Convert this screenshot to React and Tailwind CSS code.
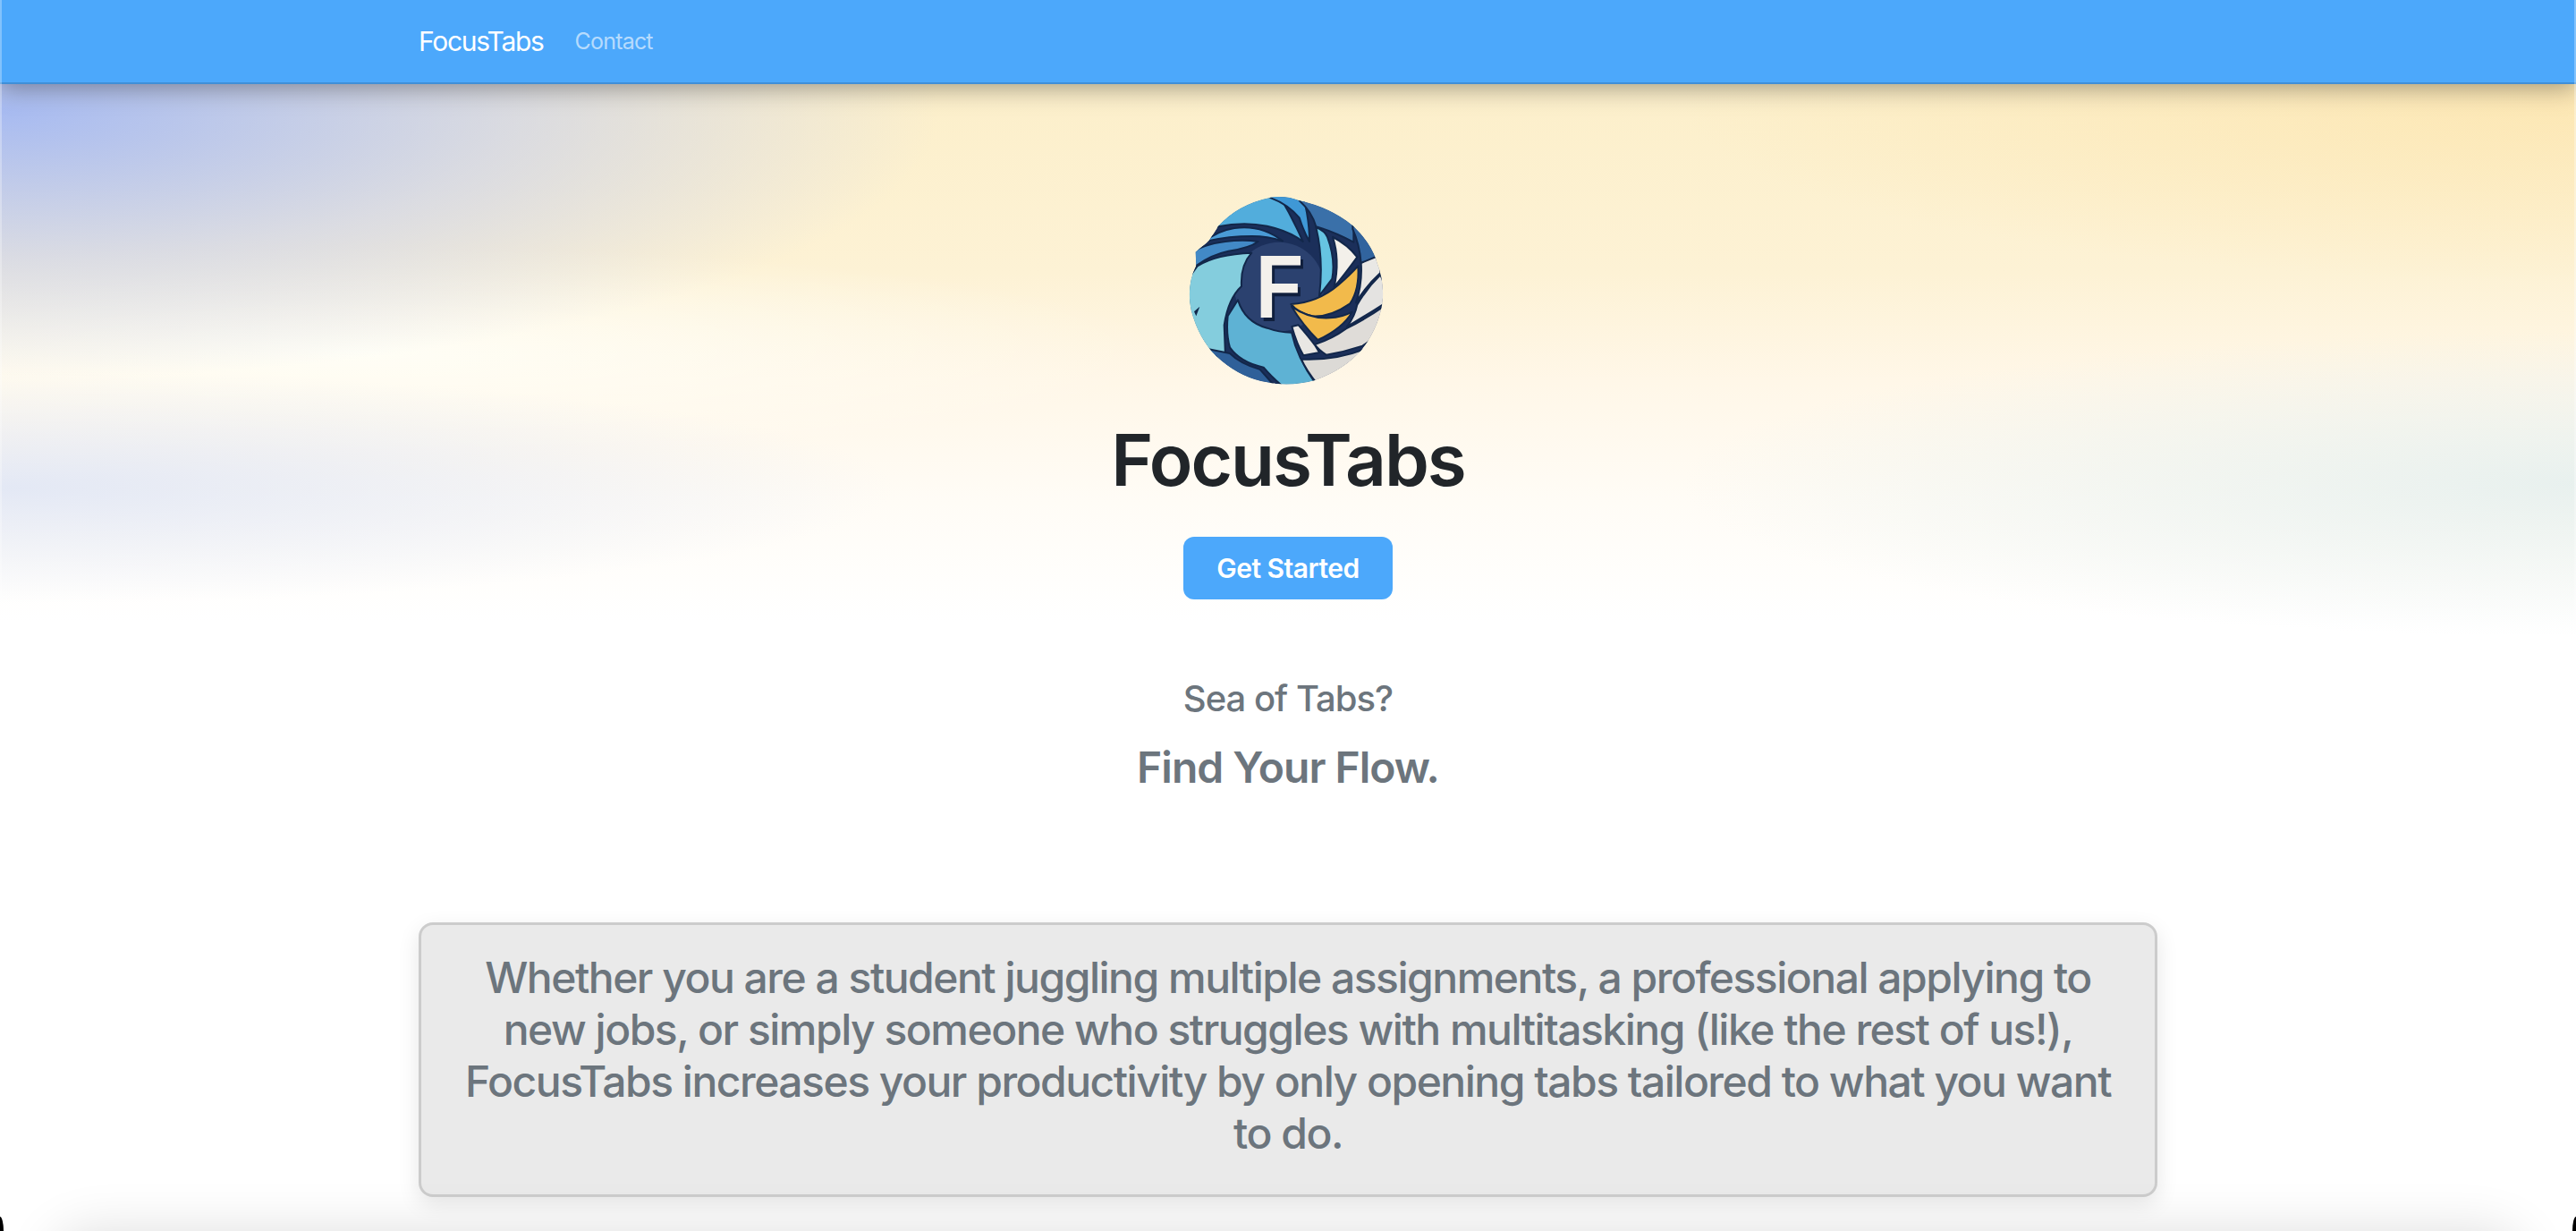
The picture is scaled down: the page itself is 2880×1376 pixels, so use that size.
const petals = [
  ["M290 192 Q350 90 510 85 Q555 160 590 240 Q545 205 470 188 Q390 172 305 190Z", "#52addc"],
  ["M470 85 L590 85 Q612 165 612 240 Q592 205 578 160 Q540 115 483 94Z", "#3f98d6"],
  ["M578 90 L760 160 L760 242 Q690 205 634 190 Q620 140 578 103Z", "#3a70a9"],
  ["M757 170 L860 290 L785 312 Q780 250 757 198Z", "#31649e"],
  ["M262 240 Q300 205 360 195 Q450 182 522 238 Q470 222 420 222 Q340 222 272 238Z", "#4a9bd6"],
  ["M215 280 Q250 250 330 240 Q390 232 440 240 Q410 262 340 272 Q280 285 234 320 L215 320Z", "#4289c6"],
  ["M236 322 Q300 282 418 278 Q380 320 384 390 Q340 430 326 520 L330 625 L240 620 L180 400Z", "#84cddd"],
  ["M338 490 L372 436 Q395 510 470 530 Q510 545 552 545 Q570 630 632 715 L540 740 Q490 700 458 662 Q380 645 345 595 Q332 550 338 490Z", "#5eb2d4"],
  ["M270 600 L345 615 Q380 650 445 668 L500 730 L340 720Z", "#2f6099"],
  ["M634 192 Q665 205 672 225 Q700 300 688 365 L645 422 Q660 300 634 192Z", "#66c4e2"],
  ["M690 225 Q740 250 772 292 Q730 350 695 392 Q715 300 690 225Z", "#f3f0ea"],
  ["M550 450 Q640 445 710 385 Q750 350 775 322 Q780 400 748 448 Q680 495 620 490 Q575 480 550 450Z", "#f2ba4b"],
  ["M552 458 Q610 500 680 496 Q720 495 755 476 Q725 530 640 570 Q590 520 552 458Z", "#f2ba4b"],
  ["M785 312 L850 285 L850 345 Q800 390 768 445 Q790 380 785 312Z", "#e9e8e5"],
  ["M850 352 L880 420 L860 450 Q790 495 738 525 Q765 490 772 452 Q805 395 850 352Z", "#e4e3e1"],
  ["M860 458 L860 540 L790 590 Q730 610 668 620 Q640 600 630 585 Q690 565 735 532 Q800 500 860 458Z", "#dfdcd8"],
  ["M553 525 L575 520 Q610 560 632 590 L645 612 L592 622 Q570 585 553 525Z", "#e9e7e4"],
  ["M585 635 Q700 640 800 600 L790 660 L640 720 Q600 670 585 635Z", "#dcdad6"],
];

const outline =
  "M483 92 Q535 85 578 103 Q680 125 755 185 Q815 240 835 300 Q862 370 858 430 Q850 520 790 600 Q730 670 630 705 Q540 730 450 708 Q370 690 300 625 Q240 565 215 470 Q198 390 232 320 L230 275 L275 237 L305 190 Q370 115 483 92Z";

function Logo() {
  return (
    <svg viewBox="201 78 678 654" className="w-[226px] h-[218px] block" aria-label="FocusTabs logo">
      <defs>
        <clipPath id="logo-outline">
          <path d={outline} />
        </clipPath>
      </defs>
      <g clipPath="url(#logo-outline)">
        <path d={outline} fill="#1b2f5a" />
        <circle cx="510" cy="392" r="150" fill="#2b416f" />
        {petals.map(([d, fill], i) => (
          <path key={i} d={d} fill={fill} stroke="#12274a" strokeWidth="6" strokeLinejoin="round" />
        ))}
        <path d="M225 475 L244 458 L232 490Z" fill="#12274a" />
      </g>
      <text x="437" y="506" fontFamily="Inter, sans-serif" fontWeight="600" fontSize="285" fill="#101f3d">F</text>
      <text x="428" y="494" fontFamily="Inter, sans-serif" fontWeight="600" fontSize="285" fill="#f4f1ec">F</text>
    </svg>
  );
}

export default function App() {
  return (
    <div className="relative h-screen overflow-hidden bg-white font-['Inter',sans-serif]">
      <nav className="relative z-10 h-[94px] bg-[#4ca8fb] border-b-2 border-[#3f8fd8] shadow-[0_4px_26px_rgba(0,0,0,0.36)]">
        <div className="w-[1944px] mx-auto h-full flex items-center gap-[35px]">
          <span className="text-[30px] text-white leading-none tracking-[-1.3px]">FocusTabs</span>
          <span className="text-[25px] text-white/60 leading-none tracking-[-0.8px]">Contact</span>
        </div>
      </nav>

      <main className="flex flex-col items-center bg-no-repeat bg-[length:100%_640px] bg-[image:radial-gradient(ellipse_1050px_300px_at_0px_30px,rgba(163,184,243,0.95),rgba(200,208,235,0.65)_55%,rgba(255,255,255,0)_100%),radial-gradient(ellipse_1000px_130px_at_0px_451px,rgba(224,230,245,0.9),rgba(255,255,255,0)_100%),radial-gradient(ellipse_1000px_170px_at_100%_447px,rgba(231,240,238,0.95),rgba(255,255,255,0)_100%),radial-gradient(ellipse_900px_120px_at_400px_300px,rgba(255,255,248,0.9),rgba(255,255,255,0)_100%),radial-gradient(ellipse_1000px_200px_at_100%_20px,rgba(253,226,165,0.6),rgba(255,255,255,0)_100%),linear-gradient(to_bottom,#fcefca_0%,#fdf2d5_33%,#fff7e8_52%,#fffcf6_73%,#ffffff_94%)]">
        <div className="mt-[122px]">
          <Logo />
        </div>
        <h1 className="mt-[32px] text-[80px] leading-[96px] font-semibold text-[#212529] tracking-[-2px]">FocusTabs</h1>
        <button className="mt-[38px] w-[234px] h-[70px] rounded-[12px] bg-[#4ca8fb] text-white text-[30px] font-semibold tracking-[-0.5px]">
          Get Started
        </button>
        <p className="mt-[87px] text-[40px] leading-[48px] font-medium text-[#6c757d] tracking-[-1px]">Sea of Tabs?</p>
        <p className="mt-[24px] text-[48px] leading-[58px] font-semibold text-[#6c757d] tracking-[-1px]">Find Your Flow.</p>
        <section className="mt-[144px] w-[1944px] h-[307px] rounded-[16px] border-[3px] border-[#cccccc] bg-[#eaeaea] shadow-[0_8px_24px_rgba(0,0,0,0.1)] px-[32px] pt-[30px] text-center text-[48px] leading-[58px] font-medium text-[#6c757d] tracking-[-1.5px]">
          Whether you are a student juggling multiple assignments, a professional applying to new jobs, or simply someone who struggles with multitasking (like the rest of us!), FocusTabs increases your productivity by only opening tabs tailored to what you want to do.
        </section>
        <footer className="mt-[40px] w-[2760px] h-[200px] shrink-0 rounded-[40px] bg-white shadow-[0_0_60px_rgba(0,0,0,0.14)]" />
      </main>

      <span className="absolute left-0 top-0 w-[2px] h-full bg-white/30 z-20" />
      <span className="absolute right-0 top-0 w-[2px] h-full bg-white/30 z-20" />
      <span className="absolute left-0 bottom-0 w-[4px] h-[16px] bg-black rounded-tr-[100%] z-30" />
      <span className="absolute right-0 bottom-0 w-[4px] h-[16px] bg-black rounded-tl-[100%] z-30" />
    </div>
  );
}
